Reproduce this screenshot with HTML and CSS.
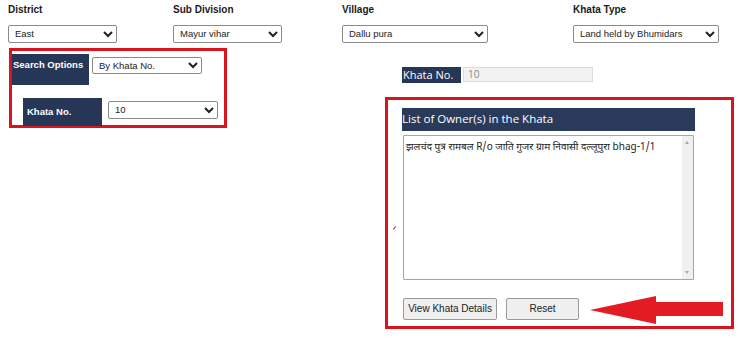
FILE: index.html
```html
<!DOCTYPE html>
<html>
<head>
<meta charset="utf-8">
<link rel="stylesheet" href="styles.css">
</head>
<body>
<div class="top">
  <div class="field">
    <div class="lbl">District</div>
    <select class="sel w109"><option>East</option></select>
  </div>
  <div class="field">
    <div class="lbl">Sub Division</div>
    <select class="sel w109"><option>Mayur vihar</option></select>
  </div>
  <div class="field">
    <div class="lbl">Village</div>
    <select class="sel w146"><option>Dallu pura</option></select>
  </div>
  <div class="field">
    <div class="lbl">Khata Type</div>
    <select class="sel w146"><option>Land held by Bhumidars</option></select>
  </div>
</div>
<div class="main">
  <div class="leftbox">
    <div class="row1">
      <div class="navy opt">Search Options</div>
      <select class="sel w110 s17"><option>By Khata No.</option></select>
    </div>
    <div class="row2">
      <div class="navy kno">Khata No.</div>
      <select class="sel w110"><option>10</option></select>
    </div>
  </div>
  <div class="right">
    <div class="krow">
      <div class="klbl">Khata No.</div>
      <input class="kin" value="10" readonly>
    </div>
    <div class="rightbox">
      <span class="mark"></span>
      <div class="hdr">List of Owner(s) in the Khata</div>
      <div class="tawrap">
        <textarea class="owners" readonly>झलचंद पुत्र रामबल R/o जाति गुजर ग्राम निवासी दल्लूपुरा bhag-1/1</textarea>
        <div class="sbar"><span class="up"></span><span class="down"></span></div>
      </div>
      <div class="btns">
        <button class="btn b1">View Khata Details</button>
        <button class="btn b2">Reset</button>
      </div>
      <svg class="arrow" width="134" height="30" viewBox="0 0 134 30">
        <polygon points="0,14 66,0 66,6 133,6 133,20 66,20 66,28" fill="#e31c23"/>
      </svg>
    </div>
  </div>
</div>
</body>
</html>
```
FILE: styles.css
```css
* { box-sizing: border-box; }
body {
  margin: 0;
  background: #fff;
  font-family: "Liberation Sans", Arial, "Noto Sans", sans-serif;
  color: #222;
  width: 752px;
  height: 340px;
  overflow: hidden;
}
.top {
  display: grid;
  grid-template-columns: 165px 169px 231px auto;
  padding: 4px 0 0 8px;
}
.lbl {
  font-weight: bold;
  font-size: 10px;
  height: 19px;
  line-height: 12px;
  color: #1a1a1a;
}
.sel {
  height: 18px;
  font-family: "Liberation Sans", Arial, sans-serif;
  font-size: 9.5px;
  color: #222;
  border: 1px solid #8a8a8a;
  border-radius: 2px;
  background: #fff;
  padding: 0 2px;
  margin: 0;
}
.w109 { width: 109px; }
.w146 { width: 146px; }
.w110 { width: 110px; }
.s17 { height: 17px; }
.main {
  display: flex;
  padding-top: 5px;
}
.leftbox {
  margin-left: 9px;
  width: 218px;
  height: 80px;
  border: 3px solid #d8141f;
  padding-top: 3px;
}
.row1 {
  display: flex;
  align-items: flex-start;
  gap: 3px;
}
.row1 .sel { margin-top: 3px; }
.navy {
  background: #253657;
  color: #fff;
  font-weight: bold;
  font-size: 9.5px;
}
.opt {
  width: 77px;
  height: 31px;
  padding: 5px 0 0 1px;
  line-height: 11px;
}
.row2 {
  display: flex;
  align-items: flex-start;
  gap: 6px;
  margin: 13px 0 0 11px;
}
.kno {
  width: 79px;
  height: 28px;
  line-height: 28px;
  padding-left: 4px;
}
.row2 .sel { margin-top: 3px; }
.right {
  margin-left: 158px;
  padding-top: 19px;
}
.krow {
  display: flex;
  gap: 2px;
  margin-left: 17px;
  height: 16px;
}
.klbl {
  width: 59px;
  height: 16px;
  background: #253657;
  color: #fff;
  font-family: "Open Sans", "Liberation Sans", sans-serif;
  font-size: 11px;
  line-height: 16px;
  padding-left: 1px;
  white-space: nowrap;
}
.kin {
  width: 130px;
  height: 15px;
  border: 1px solid #dcdcdc;
  background: #f2f2f2;
  color: #888;
  font-family: "Open Sans", "Liberation Sans", sans-serif;
  font-size: 10px;
  padding: 0 4px;
  margin: 0;
}
.rightbox {
  position: relative;
  margin-top: 14px;
  width: 349px;
  height: 232px;
  border: 3px solid #d8141f;
  padding: 8px 0 0 14px;
}
.hdr {
  width: 293px;
  height: 23px;
  background: #2a3a5b;
  color: #fff;
  font-family: "Open Sans", "Liberation Sans", sans-serif;
  font-size: 11.5px;
  line-height: 22px;
}
.tawrap {
  position: relative;
  margin: 4px 0 0 1px;
  width: 291px;
  height: 145px;
}
.owners {
  display: block;
  width: 291px;
  height: 145px;
  border: 1px solid #a5a5a5;
  border-radius: 1px;
  resize: none;
  font-family: "Noto Sans Devanagari", "Lohit Devanagari", "Noto Sans", "Liberation Sans", sans-serif;
  font-size: 10px;
  color: #222;
  padding: 5px 14px 5px 2px;
  overflow: hidden;
  line-height: 14px;
  margin: 0;
}
.sbar {
  position: absolute;
  top: 1px;
  right: 1px;
  bottom: 1px;
  width: 11px;
  background: #f0f0f0;
}
.sbar .up, .sbar .down {
  position: absolute;
  left: 3px;
  width: 0;
  height: 0;
  border-left: 2.5px solid transparent;
  border-right: 2.5px solid transparent;
}
.sbar .up { top: 5px; border-bottom: 3px solid #a8a8a8; }
.sbar .down { bottom: 5px; border-top: 3px solid #a8a8a8; }
.btns {
  display: flex;
  gap: 9px;
  margin: 18px 0 0 1px;
}
.btn {
  height: 22px;
  border: 1px solid #9a9a9a;
  border-radius: 2px;
  background: #efefef;
  font-family: "Liberation Sans", Arial, sans-serif;
  font-size: 10px;
  color: #222;
  padding: 0;
}
.b1 { width: 94px; }
.b2 { width: 73px; }
.arrow {
  position: absolute;
  left: 202px;
  top: 196px;
}
.mark {
  position: absolute;
  left: 6px;
  top: 126px;
  width: 1px;
  height: 4px;
  background: #c0306a;
  transform: rotate(35deg);
}
```
